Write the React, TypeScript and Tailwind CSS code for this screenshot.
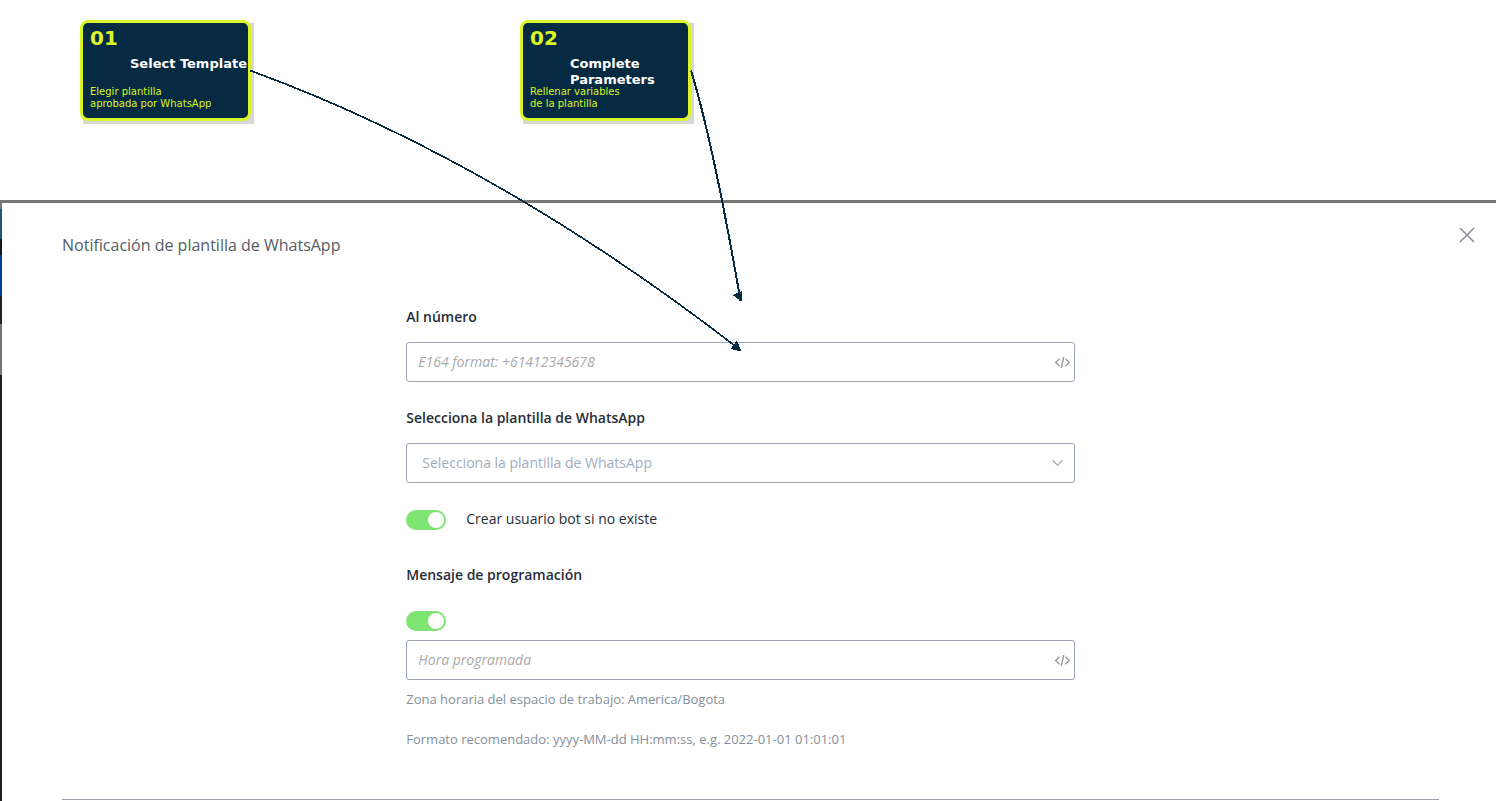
import type { ComponentProps } from "react";

type Step = { number: string; title: string; lines: [string, string] };

const steps: Step[] = [
  { number: "01", title: "Select Template", lines: ["Elegir plantilla", "aprobada por WhatsApp"] },
  { number: "02", title: "Complete Parameters", lines: ["Rellenar variables", "de la plantilla"] },
];

function StepCard({ number, title, lines }: Step) {
  return (
    <li className="relative mr-[269px] h-[101px] w-[171px] shrink-0 font-['DejaVu_Sans',sans-serif]">
      <div className="absolute top-[3px] left-[3px] h-full w-full bg-[#d7d7d7]" />
      <div className="relative h-full rounded-lg border-3 border-[#dcf528] bg-[#052a42] px-[7px] pt-[5px]">
        <p className="text-xl leading-5 font-bold text-[#dcf528]">{number}</p>
        <h2 className="-mr-[7px] mt-2 h-[30px] pl-10 text-[13px] leading-4 font-bold text-white">{title}</h2>
        <p className="text-[10px] leading-3 whitespace-nowrap text-[#dcf528]">
          {lines[0]}
          <br />
          {lines[1]}
        </p>
      </div>
    </li>
  );
}

function Arrows() {
  return (
    <svg
      className="pointer-events-none absolute top-0 left-0"
      width="760"
      height="360"
      fill="none"
      stroke="#052a42"
      strokeWidth="1.7"
      shapeRendering="crispEdges"
      aria-hidden="true"
    >
      <path d="M250 70.500Q495.500 160 741 350.500" />
      <path d="M691 70.500Q713 142 740.500 300.500" strokeWidth="2" />
      <path d="M741.500 351.500L737 340.500L730.500 349Z" fill="#052a42" stroke="none" />
      <path d="M741.500 301.500L742 291L732.500 295Z" fill="#052a42" stroke="none" />
    </svg>
  );
}

// Sliver of the page that stays visible behind the modal
function Backdrop() {
  return (
    <div className="flex w-0.5 shrink-0 flex-col bg-[#1b1f24]" aria-hidden="true">
      <div className="h-1.5 bg-[#777777]" />
      <div className="h-[30px] bg-[#1f5577]" />
      <div className="h-4 bg-[#13191e]" />
      <div className="h-[41px] bg-[#003f88]" />
      <div className="h-7 bg-[#1c2429]" />
      <div className="h-[51px] bg-[#757575]" />
    </div>
  );
}

function CodeInput(props: ComponentProps<"input">) {
  return (
    <div className="flex h-10 items-center rounded-[3px] border border-[#9ba5b7] pr-1">
      <input
        type="text"
        className="h-full min-w-0 flex-1 bg-transparent pb-0.5 pl-[11px] text-sm text-[#262d38] outline-none placeholder:text-[#aaaaaa] placeholder:italic"
        {...props}
      />
      <button type="button" aria-label="Insertar variable" className="text-[#999999]">
        <svg width="16" height="12" viewBox="0 0 16 12" fill="none" stroke="currentColor" strokeWidth="1.4">
          <path d="M5.500 2.700L1.700 6.500L5.500 10.300M11.500 2.700L15.300 6.500L11.500 10.300M9.700 1L7.300 12" />
        </svg>
      </button>
    </div>
  );
}

function Toggle(props: ComponentProps<"input">) {
  return (
    <input
      type="checkbox"
      role="switch"
      defaultChecked
      className="flex h-5 w-10 shrink-0 appearance-none items-center rounded-full bg-[#c4c9d2] px-0.5 before:size-4 before:rounded-full before:bg-white checked:justify-end checked:bg-[#7ee572]"
      {...props}
    />
  );
}

export default function App() {
  return (
    <div className="relative flex min-h-screen flex-col overflow-x-hidden bg-white font-['Open_Sans',sans-serif]">
      <ol className="flex h-[200px] pt-5 pl-20">
        {steps.map((step) => (
          <StepCard key={step.number} {...step} />
        ))}
      </ol>

      <div className="flex flex-1 border-t-3 border-[#777777]">
        <Backdrop />
        <main className="flex-1 rounded-tl-sm bg-white">
          <header className="flex items-start justify-between pr-[21px] pl-[60px]">
            <h1 className="pt-[30px] text-base leading-6 text-[#555e66]">Notificación de plantilla de WhatsApp</h1>
            <button type="button" aria-label="Cerrar" className="pt-6 text-[#8d9299]">
              <svg width="16" height="16" viewBox="0 0 16 16" fill="none" stroke="currentColor" strokeWidth="1.6">
                <path d="M1 1L15 15M15 1L1 15" />
              </svg>
            </button>
          </header>

          <div className="mr-[57px] ml-[60px] border-b border-[#9ca5ae] pt-[50px] pb-[50px]">
            <form className="mx-auto w-1/2 pr-5 text-sm leading-5 text-[#262d38]">
              <label htmlFor="number" className="mb-[15px] block font-semibold">
                Al número
              </label>
              <CodeInput id="number" placeholder="E164 format: +61412345678" />

              <label htmlFor="template" className="mt-[26px] mb-[15px] block font-semibold">
                Selecciona la plantilla de WhatsApp
              </label>
              <div className="grid h-10 items-center rounded-[3px] border border-[#9ba5b7] text-[#a3acbc]">
                <select
                  id="template"
                  className="col-start-1 row-start-1 h-full w-full appearance-none bg-transparent px-[15px] outline-none"
                >
                  <option>Selecciona la plantilla de WhatsApp</option>
                </select>
                <svg
                  className="pointer-events-none col-start-1 row-start-1 mr-2.5 justify-self-end"
                  width="12"
                  height="8"
                  viewBox="0 0 12 8"
                  fill="none"
                  stroke="currentColor"
                  strokeWidth="1.3"
                >
                  <path d="M0.500 1.200L5.500 6.200L10.500 1.200" />
                </svg>
              </div>

              <div className="mt-[27px] flex items-start gap-5">
                <Toggle id="create-user" />
                <label htmlFor="create-user" className="leading-[18px]">
                  Crear usuario bot si no existe
                </label>
              </div>

              <label htmlFor="schedule" className="mt-[35px] mb-[26px] block font-semibold">
                Mensaje de programación
              </label>
              <Toggle id="schedule" />
              <div className="mt-[9px]">
                <CodeInput aria-label="Hora programada" placeholder="Hora programada" />
              </div>
              <p className="mt-[9px] text-[13px] text-[#84909b]">
                Zona horaria del espacio de trabajo: America/Bogota
              </p>
              <p className="mt-5 text-[13px] text-[#84909b]">
                Formato recomendado: yyyy-MM-dd HH:mm:ss, e.g. 2022-01-01 01:01:01
              </p>
            </form>
          </div>
        </main>
      </div>

      <Arrows />
    </div>
  );
}
